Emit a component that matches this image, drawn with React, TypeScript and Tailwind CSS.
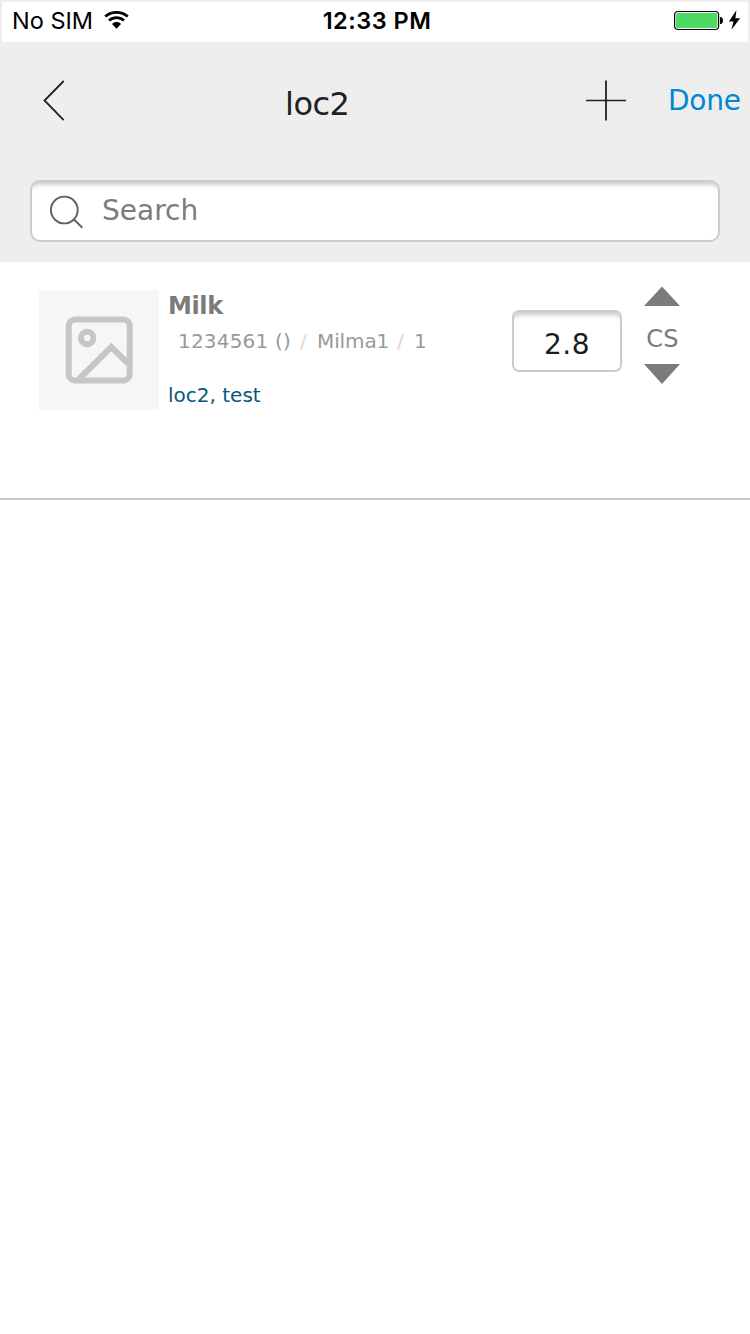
import React from 'react';

function StatusBar() {
  return (
    <div className="bg-[#eeeeee] px-[2px] pt-[2px]">
      <div className="grid h-10 grid-cols-3 items-center bg-white font-['Inter',sans-serif] text-[23.5px] leading-10 text-black">
        <div className="flex h-10 items-center pl-[10px]">
          <span className="-mt-[2px] w-[82px] whitespace-nowrap">No SIM</span>
          <svg className="-mt-[4px] ml-[10px]" width="25" height="18" viewBox="0 0 25 18" fill="none" stroke="#000">
            <path d="M1.2 5.5C7.6 -0.1 17.4 -0.1 23.8 5.5" strokeWidth="2.7" />
            <path d="M5 9.6C9.4 5.7 15.6 5.7 20 9.6" strokeWidth="2.7" />
            <path d="M8 12.9C10.7 10.5 14.3 10.5 17 12.9L12.5 17.7Z" fill="#000" stroke="none" />
          </svg>
        </div>
        <span className="-mt-[2px] pl-[4px] text-center font-semibold tracking-[0.5px] whitespace-nowrap">12:33 PM</span>
        <div className="flex h-10 items-center justify-end pr-[7px]">
          <svg className="-mt-[5px]" width="68" height="22" viewBox="0 0 68 22">
            <rect x="1.6" y="2.5" width="44" height="18" rx="3.2" fill="#fff" stroke="#000" strokeWidth="1.2" />
            <rect x="3" y="4" width="41.4" height="15" rx="1.6" fill="#4cd964" />
            <path d="M47 8H48.2Q50 9.2 50 11.5T48.2 15H47Z" fill="#000" />
            <path d="M63.4 1.3L55.9 12.4H60.5L58.4 20.8L67.2 9.3H62.4Z" fill="#000" />
          </svg>
        </div>
      </div>
    </div>
  );
}

function Header() {
  return (
    <header className="h-[220px] bg-[#eeeeee] px-[30px]">
      <div className="flex h-[138px] pt-[38px]">
        <svg className="ml-[12px] shrink-0" width="24" height="42" viewBox="0 0 24 42" fill="none" stroke="#202124" strokeWidth="1.8">
          <path d="M21.7 1L2.5 20.5L21.7 40.2" />
        </svg>
        <h1 className="mt-[4px] ml-[219px] w-[80px] shrink-0 text-[32px] leading-10 tracking-[-0.5px] text-[#202124]">loc2</h1>
        <svg className="ml-[220px] shrink-0" width="42" height="42" viewBox="0 0 42 42" fill="none" stroke="#202124">
          <path d="M1 20.5H41" strokeWidth="1.6" />
          <path d="M21 0.5V40.5" strokeWidth="1.8" />
        </svg>
        <button className="mt-[1px] ml-[41px] h-10 shrink-0 text-[28px] leading-10 tracking-[-0.2px] text-[#0088cf]">Done</button>
      </div>
      <label className="flex h-[62px] items-center rounded-[10px] border-2 border-[#cccccc] bg-white pl-[18px] shadow-[inset_0_7px_5px_-5px_rgba(0,0,0,0.24)]">
        <svg className="mt-[1px]" width="34" height="34" viewBox="0 0 34 34" fill="none" stroke="#606060" strokeWidth="1.9">
          <circle cx="14.3" cy="15" r="13.4" />
          <path d="M23.8 24.3L32.3 32.7" />
        </svg>
        <span className="ml-[18px] text-[28px] leading-10 text-[#7c7c7c]">Search</span>
      </label>
    </header>
  );
}

function Placeholder() {
  return (
    <div className="flex size-[120px] shrink-0 items-center justify-center bg-[#f6f6f6]">
      <svg width="68" height="68" viewBox="0 0 68 68" fill="none" stroke="#c6c6c6" strokeWidth="6">
        <rect x="3.7" y="3.5" width="61" height="61" rx="6.5" />
        <circle cx="22.2" cy="22" r="6.2" />
        <path d="M13 64L46.3 31L63 47.5" />
      </svg>
    </div>
  );
}

export default function App() {
  return (
    <div className="min-h-[1334px] w-[750px] bg-white font-['DejaVu_Sans',sans-serif]">
      <StatusBar />
      <Header />
      <main className="flex h-[238px] border-b-2 border-[#cccccc] pl-[39px]">
        <div className="pt-7">
          <Placeholder />
        </div>
        <div className="ml-[9px] w-[344px] pt-7">
          <h2 className="h-8 text-2xl leading-8 font-bold tracking-[-0.4px] text-[#7b7b7b]">Milk</h2>
          <p className="mt-[3px] flex h-8 pl-[10px] text-xl leading-8 whitespace-pre text-[#999999]">
            <span className="w-[122px] tracking-[0.2px]">1234561 ()</span>
            <span className="w-[17px] text-[#d8d8d8]">/</span>
            <span className="w-[80px] tracking-[-0.1px]">Milma1</span>
            <span className="w-[17px] text-[#d8d8d8]">/</span>
            <span>1</span>
          </p>
          <p className="mt-[22px] text-xl leading-8 text-[#0b557e]">loc2, test</p>
        </div>
        <div className="mt-12 flex h-[62px] w-[110px] items-center justify-center rounded-[7px] border-2 border-[#cccccc] bg-white pt-[7px] text-[28px] tracking-[0.5px] text-[#1b1b22] shadow-[inset_0_7px_5px_-4px_rgba(0,0,0,0.21)]">
          2.8
        </div>
        <div className="mt-6 ml-[22px] flex w-9 flex-col items-center">
          <svg width="36" height="20" viewBox="0 0 36 20" fill="#7b7b7b"><path d="M18 0.5L36 20H0Z" /></svg>
          <span className="mt-[17px] h-8 pl-px text-2xl leading-8 tracking-[0.3px] text-[#7b7b7b]">CS</span>
          <svg className="mt-[9px]" width="36" height="20" viewBox="0 0 36 20" fill="#7b7b7b"><path d="M0 0H36L18 20Z" /></svg>
        </div>
      </main>
    </div>
  );
}
